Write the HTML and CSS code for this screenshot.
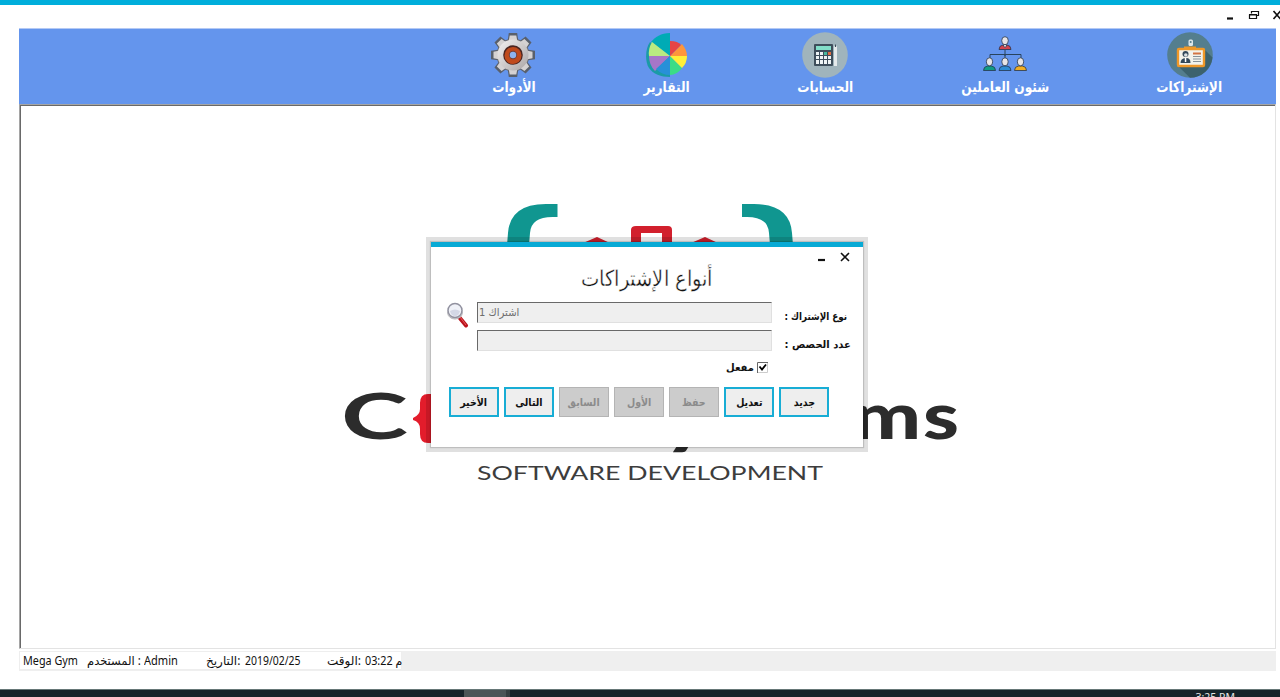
FILE: index.html
```html
<!DOCTYPE html>
<html lang="ar">
<head>
<meta charset="utf-8">
<title>Mega Gym</title>
<link rel="stylesheet" href="styles.css">
</head>
<body>
<div class="app">
  <header class="titlebar">
    <svg class="winctl" width="60" height="14" viewBox="0 0 60 14" fill="none" stroke="#111">
      <path d="M7 10.500h6" stroke-width="2.200"/>
      <path d="M31.500 5.500V3.500h7v4h-2M29.500 7v3.500h7V7zM29 6.500h8M31 3.500h8" stroke-width="1.200"/>
      <path d="M53.500 3l7 8M60.500 3l-7 8" stroke-width="1.700"/>
    </svg>
  </header>

  <nav class="nav">
    <a class="item tools">
      <svg width="46" height="46" viewBox="0 0 46 46">
        <defs><linearGradient id="metal" x2="1" y2="1"><stop stop-color="#f4f2f2"/><stop offset="1" stop-color="#aaa5a5"/></linearGradient></defs>
        <g fill="#59606c"><path id="tooth" d="M17.500 10l1.300-9h8.400l1.300 9z"/><use href="#tooth" transform="rotate(45 23 23)"/><use href="#tooth" transform="rotate(90 23 23)"/><use href="#tooth" transform="rotate(135 23 23)"/><use href="#tooth" transform="rotate(180 23 23)"/><use href="#tooth" transform="rotate(225 23 23)"/><use href="#tooth" transform="rotate(270 23 23)"/><use href="#tooth" transform="rotate(315 23 23)"/></g>
        <circle cx="23" cy="23" r="16.500" fill="#686b73"/>
        <g fill="#d5d2d2"><path id="inner" d="M18.500 10l1.200-6.500h6.600l1.200 6.500z"/><use href="#inner" transform="rotate(45 23 23)"/><use href="#inner" transform="rotate(90 23 23)"/><use href="#inner" transform="rotate(135 23 23)"/><use href="#inner" transform="rotate(180 23 23)"/><use href="#inner" transform="rotate(225 23 23)"/><use href="#inner" transform="rotate(270 23 23)"/><use href="#inner" transform="rotate(315 23 23)"/></g>
        <circle cx="23" cy="23" r="15.500" fill="url(#metal)"/>
        <circle cx="23" cy="23" r="9.800" fill="#4b2520"/><circle cx="23" cy="23.500" r="8.500" fill="#c04a1c"/>
        <circle cx="23" cy="23" r="4.200" fill="#71403a"/><circle cx="23" cy="23" r="3.200" fill="#8db4ef"/>
      </svg>
      <span class="label">الأدوات</span>
    </a>
    <a class="item reports">
      <svg width="42" height="46" viewBox="0 0 42 46">
        <path d="M24 24L4 10C-1 17-1 30 3 36c4 6 12 9 21 9z" fill="#1a9ba6"/>
        <path d="M24 24V1C15 1 9 5 5 10z" fill="#00abb5"/>
        <path d="M24 24L6 10Q2 17 3 24z" fill="#b9ea80"/>
        <path d="M24 24H3q0 9 6 15z" fill="#a676c8"/>
        <path d="M24 24L10 37q6 6 14 6z" fill="#2790d8"/>
        <path d="M24 24v19q7 0 12-7z" fill="#3bdc86"/>
        <path d="M24 24l12 12q5-5 5-12z" fill="#ffef38"/>
        <path d="M24 24h17q0-6-5-12z" fill="#fd963b"/>
        <path d="M24 24V9q8 0 11 4z" fill="#e64446"/>
      </svg>
      <span class="label">التقارير</span>
    </a>
    <a class="item accounts">
      <svg width="46" height="46" viewBox="0 0 46 46">
        <circle cx="23" cy="23" r="22.800" fill="#a0b4bc"/>
        <rect x="12" y="12" width="19" height="22" rx="1" fill="#3e4e5b"/>
        <rect x="14" y="14" width="15" height="4" fill="#82dec9"/>
        <g fill="#eef3f5"><path d="M14 20h3v3h-3zM18 20h3v3h-3zM14 24h3v3h-3zM18 24h3v3h-3zM22 24h3v3h-3zM26 24h3v3h-3zM14 28h3v4h-3zM18 28h3v4h-3zM22 28h3v4h-3zM26 28h3v4h-3z"/></g>
        <path d="M22 20h3v3h-3z" fill="#47b99d"/><path d="M26 20h3v3h-3z" fill="#df6b41"/>
        <path d="M32 15l1.500-2.500L35 15v19h-3z" fill="#e5eaec"/><path d="M33 12.500h1V15h-1z" fill="#3e4e5b"/>
      </svg>
      <span class="label">الحسابات</span>
    </a>
    <a class="item staff">
      <svg width="46" height="46" viewBox="0 0 46 46">
        <path d="M23 18v6M8 26v-3.500h31V26M23 22v4" fill="none" stroke="#28435d" stroke-width="1"/>
        <g stroke="#26364c" stroke-width=".8">
          <path d="M17 17.500q0-4 4-4.500h4q4 .5 4 4.500z" fill="#d7444e"/><path d="M21.500 12h3v2l-1.500 1.500-1.500-1.500z" fill="#ddd"/><ellipse cx="23" cy="8.700" rx="3.300" ry="4" fill="#e7e5e7"/>
          <path d="M1.500 38.500q0-4 4-4.500h4q4 .5 4 4.500z" fill="#109b85"/><ellipse cx="7.500" cy="29.800" rx="3.200" ry="4" fill="#e7e5e7"/>
          <path d="M17 38.500q0-4 4-4.500h4q4 .5 4 4.500z" fill="#2c8bd3"/><ellipse cx="23" cy="29.800" rx="3.200" ry="4" fill="#e7e5e7"/>
          <path d="M32.500 38.500q0-4 4-4.500h4q4 .5 4 4.500z" fill="#f1ad23"/><ellipse cx="38.500" cy="29.800" rx="3.200" ry="4" fill="#e7e5e7"/>
        </g>
      </svg>
      <span class="label">شئون العاملين</span>
    </a>
    <a class="item members">
      <svg width="46" height="46" viewBox="0 0 46 46">
        <circle cx="23" cy="23" r="22.800" fill="#547e8e"/>
        <path d="M37 17l8.500 8.500A22.800 22.800 0 0 1 23 45.800L11 34z" fill="#3c626d"/>
        <rect x="11" y="17" width="26" height="17" rx="1" fill="#f3f3eb" stroke="#ef9828" stroke-width="2.400"/>
        <path d="M17 17v-2.500h12V17z" fill="#ef9828"/>
        <rect x="21.500" y="7.500" width="4.500" height="6.500" rx="1.500" fill="#dce6e9"/><circle cx="23.700" cy="10" r="1" fill="#547e8e"/>
        <circle cx="18.500" cy="22" r="3" fill="#33495a"/><circle cx="18.800" cy="23" r="1.800" fill="#dce2e4"/>
        <path d="M13.500 31q0-4.500 5-5t5 5z" fill="#33495a"/><path d="M17.800 26h1.500v4h-1.500z" fill="#fff"/>
        <path d="M26 20.500h8v2h-8z" fill="#d37442"/><path d="M26 24.500h8M26 27h8M26 29.500h8" stroke="#879299"/>
      </svg>
      <span class="label">الإشتراكات</span>
    </a>
  </nav>

  <main class="client">
    <svg class="logo" width="1254" height="543" viewBox="21 106 1254 543">
      <g fill="#109690">
        <path d="M557.500 204v13h-5Q531 217 530 233l-1 12h-22l1-12Q510 204 546 204z"/>
        <path d="M742 204v13h5Q768 217 769 233l1 12h23l-1-12Q790 204 754 204z"/>
      </g>
      <g fill="#d2202d"><path d="M583 243l14-6 13 6zM691 243l14-6 13 6z"/><path d="M631 245V230q0-4 5-4h32q4 0 4 4v15h-10v-12h-21v12z"/></g>
      <g class="brand">
        <text x="341" y="439" textLength="67" lengthAdjust="spacingAndGlyphs">C</text>
        <text class="low" x="663" y="441" textLength="48" lengthAdjust="spacingAndGlyphs">y</text>
        <text class="low" x="852" y="439" textLength="69" lengthAdjust="spacingAndGlyphs">m</text>
        <text class="low" x="923" y="439" textLength="36" lengthAdjust="spacingAndGlyphs">s</text>
      </g>
      <path d="M433 394h-5q-8 0-8 9v6q0 6-7 9v2q7 2 7 9v5q0 9 8 9h5z" fill="#e31c2b"/>
      <text class="tagline" x="477" y="480" textLength="346" lengthAdjust="spacingAndGlyphs">SOFTWARE DEVELOPMENT</text>
    </svg>

    <section class="dialog">
      <div class="dialog-ctl">
        <svg width="36" height="12" viewBox="0 0 36 12" fill="none" stroke="#111"><path d="M1 9h7" stroke-width="2.200"/><path d="M24 2l8 8M32 2l-8 8" stroke-width="1.600"/></svg>
      </div>
      <h1 class="dialog-title"><span>أنواع الإشتراكات</span></h1>
      <div class="form">
        <svg class="search" width="23" height="26" viewBox="0 0 23 26">
          <path d="M13 15l7 8.500" stroke="#bb141d" stroke-width="4" stroke-linecap="round"/>
          <path d="M14 15l6 8" stroke="#e65a5c" stroke-width="1"/>
          <ellipse cx="9" cy="11" rx="7.300" ry="6" fill="#ddd" stroke="#b5b5b9"/>
          <circle cx="9" cy="8.500" r="7" fill="#f0f2f8" stroke="#9292a0" stroke-width="1.500"/>
          <path d="M4 9q5-3 10 0-1 5-5 5t-5-5" fill="#d4d8e6"/>
        </svg>
        <div class="field" dir="rtl"><span class="value">اشتراك 1</span></div>
        <div class="caption type" dir="rtl"><span>نوع الإشتراك :</span></div>
        <div class="field second"></div>
        <div class="caption count" dir="rtl"><span>عدد الحصص :</span></div>
      </div>
      <div class="check" dir="rtl">
        <svg width="11" height="11" viewBox="0 0 11 11" fill="none"><path d="M.5 11V.5H11" stroke="#666"/><path d="M10.500 1v9.500H1" stroke="#ccc"/><path d="M2.500 4.500l2.500 3 4-5" stroke="#000" stroke-width="1.800"/></svg>
        <span>مفعل</span>
      </div>
      <div class="buttons">
        <button class="btn"><span>الأخير</span></button>
        <button class="btn"><span>التالى</span></button>
        <button class="btn off"><span>السابق</span></button>
        <button class="btn off"><span>الأول</span></button>
        <button class="btn off"><span>حفظ</span></button>
        <button class="btn"><span>تعديل</span></button>
        <button class="btn"><span>جديد</span></button>
      </div>
    </section>
  </main>

  <footer class="status">
    <div class="cells">
      <span class="c1">Mega Gym</span><span class="c2">المستخدم :</span><span class="c3">Admin</span><span class="c4">التاريخ:</span><span class="c5">2019/02/25</span><span class="c6">الوقت:</span><span class="c7">03:22 م</span>
    </div>
  </footer>
  <div class="taskbar"><div class="task"></div><span class="clock">3:25 PM</span></div>
</div>
</body>
</html>
```
FILE: styles.css
```css
* { box-sizing: border-box; }
body { margin: 0; background: #fff; font-family: "Noto Sans", "DejaVu Sans", sans-serif; color: #111; overflow: hidden; }
.app { width: 1280px; height: 697px; display: flex; flex-direction: column; overflow: hidden; border-top: 5px solid #00aedb; }
.titlebar { height: 23px; flex: none; display: flex; justify-content: flex-end; padding-top: 3px; }

.nav { flex: none; height: 76px; margin: 0 4px 0 19px; padding-left: 419px; background: #6495ed; border-top: 1px solid #b3c9f5; display: grid; grid-template-columns: 152px 154px 162px 198px 171px; }
.item { display: flex; flex-direction: column; align-items: center; padding-top: 3px; color: #fff; }
.item svg { flex: none; display: block; }
.tools svg { transform: translateX(-1px); }
.label { font: bold 14.500px/22px "DejaVu Sans", sans-serif; white-space: nowrap; margin-top: -2px; transform: scaleX(.84); }

.client { flex: none; position: relative; height: 545px; margin: 0 4px 0 19px; border: 1px solid #a5a5a5; border-right-color: #e3e3e3; border-bottom-color: #e3e3e3; padding: 1px 0 0 1px; box-shadow: inset 1px 1px 0 #696969; overflow: hidden; }
.logo { display: block; }
.brand text { font: 700 64px Lato, sans-serif; fill: #2c2c2c; }
.brand .low { font-size: 64px; font-weight: 900; }
.tagline { font: 400 19.500px Lato, sans-serif; fill: #3d3d3d; }

.dialog { position: absolute; left: 411px; top: 137px; width: 432px; height: 205px; background: #fff; border-top: 5px solid #08aad5; box-shadow: 0 0 0 5px rgba(0, 0, 0, .12), 0 0 1px 1px rgba(0, 0, 0, .15); }
.dialog-ctl { height: 16px; padding: 4px 10px 0; display: flex; justify-content: flex-end; }
.dialog-title { margin: 0; height: 39px; text-align: center; font: 200 22px/34px "DejaVu Sans", sans-serif; color: #111; white-space: nowrap; }
.dialog-title span, .caption span, .check span, .btn span, .value, .cells span { display: inline-block; }
.dialog-title span { transform: translate(-1px, -1px) scaleX(.885); -webkit-text-stroke: .4px #fff; }
.form { display: grid; grid-template-columns: 31px 295px 79px; grid-template-rows: 21px 21px; row-gap: 7px; padding-left: 15px; }
.search { grid-row: 1 / 3; }
.field { background: #efefef; border: 1px solid #e0e0e0; border-top-color: #696969; border-left-color: #696969; padding-left: 1px; font: 11px/20px "DejaVu Sans", sans-serif; color: #6d6d6d; text-align: left; white-space: nowrap; }
.value { transform: scaleX(.91); transform-origin: left; }
.caption { font: bold 10.500px/28px "DejaVu Sans", sans-serif; white-space: nowrap; padding-right: 4px; }
.caption span { transform: scaleX(.95); transform-origin: right; }
.type span { transform: scaleX(.835); }
.count { padding-right: 0; }
.check { height: 36px; padding: 11px 95px 0 0; display: flex; gap: 3px; font: bold 10px/11px "DejaVu Sans", sans-serif; }
.buttons { display: flex; gap: 5px; padding-left: 18px; }
.btn { width: 50px; height: 30px; padding: 0; border: 2px solid #18add5; background: #eee; color: #111; font: bold 11px/24px "DejaVu Sans", sans-serif; white-space: nowrap; }
.btn span { transform: translateY(1px) scaleX(.86); }
.btn.off { border: 1px solid #b4b4b4; background: #ccc; color: #8b8b8b; }

.status { flex: none; height: 20px; margin: 2px 4px 0 19px; background: #efefef; }
.cells { width: 383px; height: 19px; background: #fff; border: 1px solid #eee; padding-left: 3px; display: flex; font: 12px/17px "Noto Sans", "DejaVu Sans", sans-serif; white-space: nowrap; }
.cells span { flex: none; transform-origin: left; }
.c1 { width: 62px; transform: scaleX(.9); }
.c2 { width: 57px; transform: scaleX(.96); }
.c3 { width: 62px; transform: scaleX(.92); }
.c4 { width: 39px; }
.c5 { width: 82px; transform: scaleX(.87); }
.c6 { width: 38px; }
.c7 { transform: scaleX(.9); }
.cells .c2, .cells .c3, .cells .c4, .cells .c5, .cells .c6, .cells .c7 { margin-left: 2px; margin-right: -2px; }
.taskbar { flex: none; height: 8px; margin-top: 18px; background: #15232a; border-top: 1px solid #677; display: flex; justify-content: space-between; padding: 0 45px 0 464px; }
.task { width: 46px; height: 8px; background: #4b5557; border-right: 4px solid #353f41; }
.clock { font-size: 10.500px; line-height: 14px; color: #e5e5e5; }
```
